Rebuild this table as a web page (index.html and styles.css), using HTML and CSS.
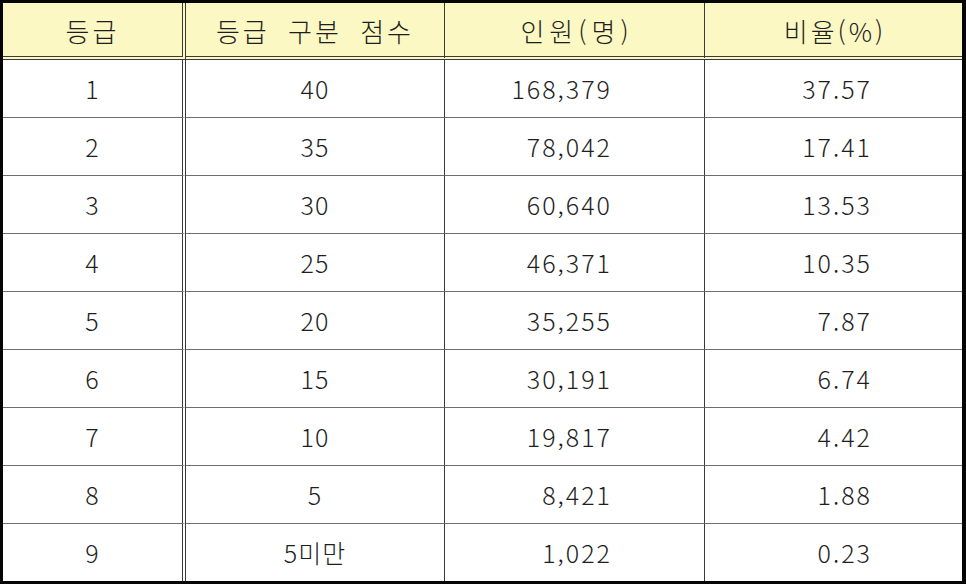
FILE: index.html
```html
<!DOCTYPE html>
<html lang="ko">
<head>
<meta charset="utf-8">
<link rel="stylesheet" href="styles.css">
</head>
<body>
<div class="grade-table">
  <div class="cell head c1">등급</div>
  <div class="cell head c2">등급 구분 점수</div>
  <div class="cell head c3">인원(명)</div>
  <div class="cell head c4">비율(%)</div>

  <div class="cell c1">1</div><div class="cell c2">40</div><div class="cell c3 num">168,379</div><div class="cell c4 num">37.57</div>
  <div class="cell c1">2</div><div class="cell c2">35</div><div class="cell c3 num">78,042</div><div class="cell c4 num">17.41</div>
  <div class="cell c1">3</div><div class="cell c2">30</div><div class="cell c3 num">60,640</div><div class="cell c4 num">13.53</div>
  <div class="cell c1">4</div><div class="cell c2">25</div><div class="cell c3 num">46,371</div><div class="cell c4 num">10.35</div>
  <div class="cell c1">5</div><div class="cell c2">20</div><div class="cell c3 num">35,255</div><div class="cell c4 num">7.87</div>
  <div class="cell c1">6</div><div class="cell c2">15</div><div class="cell c3 num">30,191</div><div class="cell c4 num">6.74</div>
  <div class="cell c1">7</div><div class="cell c2">10</div><div class="cell c3 num">19,817</div><div class="cell c4 num">4.42</div>
  <div class="cell c1">8</div><div class="cell c2">5</div><div class="cell c3 num">8,421</div><div class="cell c4 num">1.88</div>
  <div class="cell c1 last">9</div><div class="cell c2 last">5미만</div><div class="cell c3 num last">1,022</div><div class="cell c4 num last">0.23</div>
</div>
</body>
</html>
```
FILE: styles.css
```css
html, body {
  margin: 0;
  padding: 0;
  background: #ffffff;
}

.grade-table {
  box-sizing: border-box;
  width: 966px;
  height: 584px;
  border-style: solid;
  border-color: #050505;
  border-width: 3px 4px 3px 3px;
  display: grid;
  grid-template-columns: 183px 259px 260px 257px;
  grid-template-rows: 57px repeat(8, 58px) 57px;
  font-family: "Noto Sans CJK KR", "Noto Sans", sans-serif;
  font-weight: 300;
  font-size: 25px;
  color: #1e1e1e;
}

.cell {
  box-sizing: border-box;
  display: flex;
  align-items: center;
  justify-content: center;
  border-bottom: 1px solid #6e6e6e;
  letter-spacing: 1px;
  line-height: 1;
}

.c1 {
  border-right: 4px double #3a3a3a;
}

.c2, .c3 {
  border-right: 1px solid #3a3a3a;
}

.head {
  background: #fcf8c4;
  border-bottom: 4px double #3a3a3a;
  padding-top: 2px;
  font-size: 26px;
  letter-spacing: 3px;
}

.head.c2 {
  word-spacing: 8px;
}

.head.c3 {
  letter-spacing: 5px;
  padding-left: 5px;
}

.head.c4 {
  letter-spacing: 3px;
  padding-left: 3px;
}

.num {
  justify-content: flex-end;
  letter-spacing: 2px;
}

.c3.num {
  padding-right: 92px;
}

.c4.num {
  padding-right: 90px;
}

.last {
  border-bottom: none;
}
```
